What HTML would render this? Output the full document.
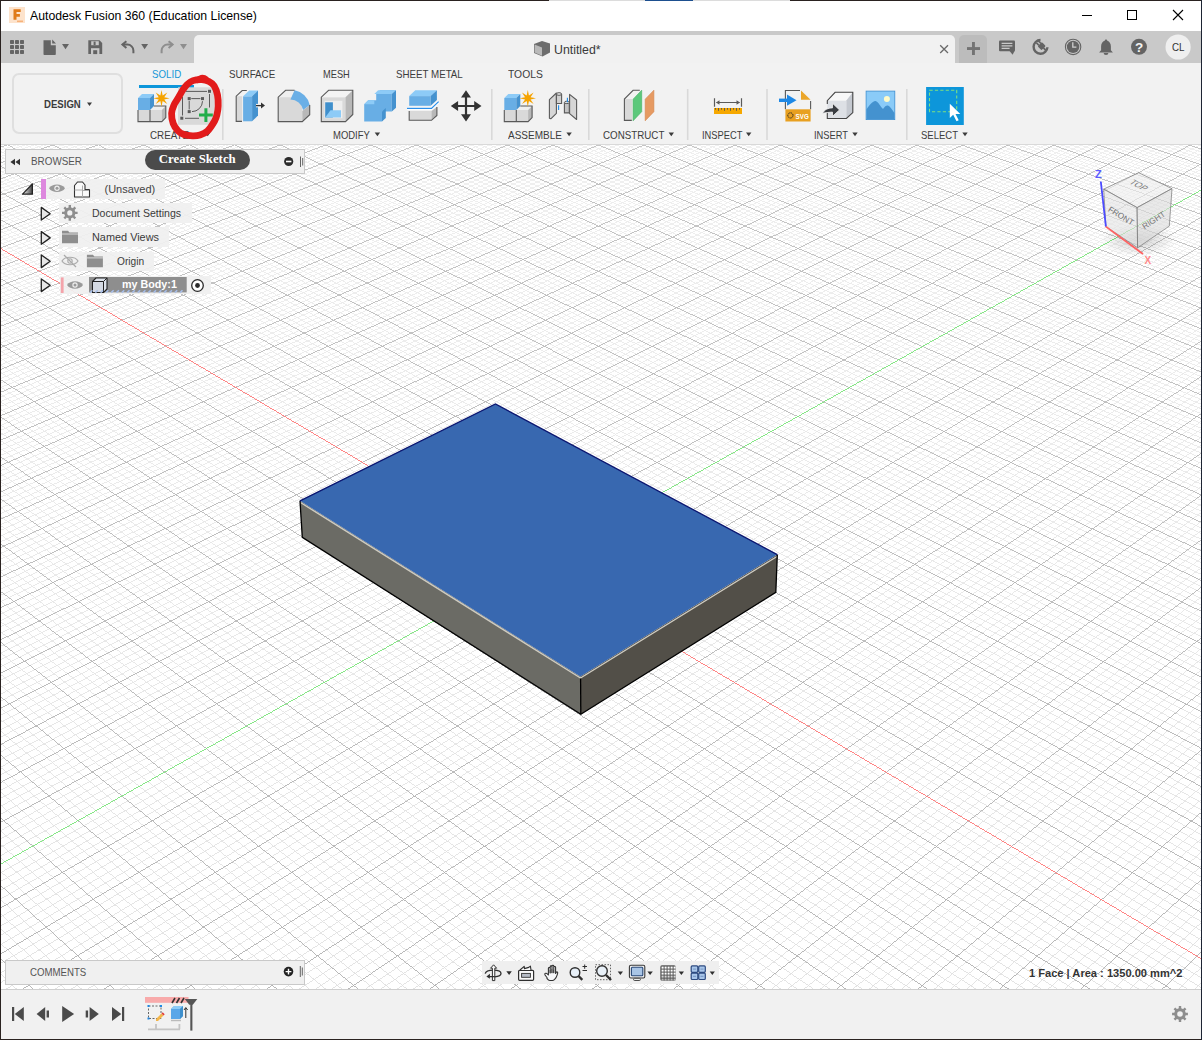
<!DOCTYPE html>
<html><head><meta charset="utf-8"><style>
html,body{margin:0;padding:0;width:1202px;height:1040px;overflow:hidden;background:#fff;font-family:"Liberation Sans",sans-serif}
.a{position:absolute}
.t{position:absolute;white-space:nowrap;line-height:1;transform-origin:0 0}
.ov{position:absolute;left:0;top:0}
.row{position:absolute;background:#f0f0f0;opacity:.93}
</style></head><body>
<div class="a" style="left:0;top:0;width:1202px;height:1040px;background:#2a2220"></div>
<div class="a" style="left:549px;top:0;width:96px;height:1px;background:#dcdcdc"></div>
<div class="a" style="left:645px;top:0;width:48px;height:1px;background:#1d4f8f"></div>
<div class="a" style="left:693px;top:0;width:97px;height:1px;background:#dcdcdc"></div>
<div class="a" style="left:1201px;top:0;width:1px;height:1040px;background:#1d2433"></div>
<div class="a" style="left:1px;top:1px;width:1200px;height:30px;background:#fff"></div>
<div class="a" style="left:1px;top:31px;width:1200px;height:32px;background:#c9c9c9"></div>
<div class="a" style="left:194px;top:35px;width:761px;height:28px;background:#f1f1f1;border-radius:5px 5px 0 0"></div>
<div class="a" style="left:959px;top:35px;width:28px;height:28px;background:#bcbcbc;border-radius:5px 5px 0 0"></div>
<div class="a" style="left:1px;top:63px;width:1200px;height:81px;background:#f2f2f2"></div>
<div class="a" style="left:1px;top:144px;width:1200px;height:1px;background:#d9d9d9"></div>
<div class="a" style="left:12px;top:73px;width:107px;height:57px;border:2px solid #dfdfdf;border-radius:7px"></div>
<div class="a" style="left:139px;top:85px;width:55px;height:2.5px;background:#0d96da"></div>
<div class="a" style="left:1px;top:145px;width:1200px;height:844px;overflow:hidden;background:#fff"><div class="a" style="left:-1px;top:-145px;width:1202px;height:1040px"><svg class="ov" width="1202" height="1040" viewBox="0 0 1202 1040" fill="none" stroke-width="0.86" shape-rendering="crispEdges"><defs><linearGradient id="gm" gradientUnits="userSpaceOnUse" x1="0" y1="145" x2="0" y2="989"><stop offset="0" stop-color="#ededed"/><stop offset="1" stop-color="#dfdfdf"/></linearGradient><linearGradient id="gM" gradientUnits="userSpaceOnUse" x1="0" y1="145" x2="0" y2="989"><stop offset="0" stop-color="#bcbcbc"/><stop offset="1" stop-color="#adadad"/></linearGradient></defs><path d="M-736.8 362L602.5 -77.2M-734.2 364.8L606.1 -76M-731.5 367.5L609.7 -74.8M-728.9 370.2L613.4 -73.6M-723.5 375.8L620.7 -71.2M-720.8 378.6L624.3 -70M-718.1 381.4L628 -68.8M-715.3 384.2L631.7 -67.6M-709.9 389.9L639.1 -65.2M-707.1 392.7L642.8 -64M-704.3 395.6L646.5 -62.7M-701.5 398.5L650.3 -61.5M-695.9 404.3L657.8 -59.1M-693.1 407.2L661.5 -57.8M-690.3 410.1L665.3 -56.6M-687.4 413L669.1 -55.3M-681.7 419L676.7 -52.8M-678.8 421.9L680.5 -51.6M-675.9 424.9L684.4 -50.3M-673 427.9L688.2 -49.1M-667.2 434L695.9 -46.5M-664.2 437L699.8 -45.3M-661.2 440.1L703.7 -44M-658.3 443.2L707.6 -42.7M-652.3 449.4L715.4 -40.1M-649.3 452.5L719.4 -38.9M-646.2 455.6L723.3 -37.6M-643.2 458.8L727.3 -36.3M-637.1 465.1L735.2 -33.7M-634 468.3L739.2 -32.4M-630.9 471.5L743.2 -31M-627.8 474.7L747.2 -29.7M-621.5 481.2L755.3 -27.1M-618.3 484.4L759.3 -25.7M-615.2 487.7L763.4 -24.4M-612 491L767.5 -23.1M-605.5 497.6L775.7 -20.4M-602.3 501L779.8 -19M-599.1 504.3L783.9 -17.7M-595.8 507.7L788 -16.3M-589.2 514.5L796.3 -13.6M-585.9 517.9L800.5 -12.2M-582.6 521.3L804.7 -10.9M-579.3 524.8L808.9 -9.5M-572.5 531.7L817.3 -6.7M-569.1 535.2L821.6 -5.3M-565.7 538.8L825.8 -3.9M-562.3 542.3L830.1 -2.5M-555.4 549.4L838.6 0.3M-551.9 553L842.9 1.7M-548.5 556.6L847.3 3.1M-544.9 560.2L851.6 4.5M-537.9 567.5L860.3 7.4M-534.3 571.2L864.7 8.8M-530.7 574.9L869 10.2M-527.2 578.6L873.4 11.7M-519.9 586.1L882.3 14.6M-516.3 589.9L886.7 16M-512.6 593.6L891.1 17.5M-508.9 597.4L895.6 18.9M-501.5 605.1L904.6 21.9M-497.8 609L909.1 23.4M-494 612.9L913.6 24.8M-490.2 616.8L918.1 26.3M-482.6 624.6L927.2 29.3M-478.8 628.6L931.8 30.8M-474.9 632.6L936.4 32.3M-471 636.6L941 33.8M-463.2 644.6L950.3 36.9M-459.3 648.7L954.9 38.4M-455.3 652.8L959.6 39.9M-451.4 656.9L964.3 41.5M-443.3 665.2L973.7 44.5M-439.3 669.4L978.4 46.1M-435.2 673.6L983.1 47.6M-431.2 677.8L987.9 49.2M-422.9 686.3L997.4 52.3M-418.8 690.6L1002.2 53.9M-414.6 694.9L1007 55.5M-410.4 699.2L1011.9 57.1M-402 707.9L1021.6 60.3M-397.7 712.3L1026.5 61.9M-393.4 716.8L1031.4 63.5M-389.1 721.2L1036.3 65.1M-380.4 730.2L1046.1 68.3M-376.1 734.7L1051.1 69.9M-371.7 739.2L1056.1 71.6M-367.2 743.8L1061.1 73.2M-358.3 753L1071.1 76.5M-353.8 757.7L1076.1 78.1M-349.3 762.4L1081.2 79.8M-344.7 767L1086.3 81.5M-335.6 776.5L1096.5 84.8M-330.9 781.3L1101.6 86.5M-326.3 786.1L1106.7 88.2M-321.6 790.9L1111.9 89.9M-312.2 800.7L1122.2 93.3M-307.4 805.6L1127.5 95M-302.6 810.6L1132.7 96.7M-297.8 815.5L1137.9 98.4M-288.1 825.6L1148.5 101.9M-283.2 830.6L1153.8 103.6M-278.3 835.7L1159.1 105.4M-273.3 840.8L1164.4 107.1M-263.3 851.1L1175.2 110.6M-258.3 856.3L1180.5 112.4M-253.2 861.6L1186 114.2M-248.1 866.9L1191.4 115.9M-237.8 877.5L1202.3 119.5M-232.6 882.9L1207.8 121.3M-227.4 888.2L1213.3 123.1M-222.1 893.7L1218.8 124.9M-211.5 904.6L1229.9 128.6M-206.2 910.2L1235.5 130.4M-200.8 915.7L1241.1 132.2M-195.4 921.3L1246.7 134.1M-184.5 932.6L1258 137.8M-179 938.3L1263.7 139.6M-173.4 944L1269.4 141.5M-167.8 949.8L1275.1 143.4M-156.6 961.4L1286.6 147.2M-150.9 967.3L1292.3 149.1M-145.1 973.2L1298.1 151M-139.4 979.2L1304 152.9M-127.8 991.2L1315.7 156.7M-121.9 997.2L1321.5 158.6M-116 1003.3L1327.4 160.6M-110 1009.5L1333.4 162.5M-98 1021.9L1345.3 166.4M-92 1028.1L1351.3 168.4M-85.9 1034.4L1357.3 170.3M-79.7 1040.8L1363.3 172.3M-67.3 1053.6L1375.4 176.3M-61.1 1060.1L1381.5 178.3M-54.8 1066.6L1387.6 180.3M-48.4 1073.1L1393.8 182.3M-35.6 1086.3L1406.1 186.4M-29.2 1093L1412.3 188.4M-22.7 1099.7L1418.6 190.4M-16.1 1106.5L1424.8 192.5M-2.9 1120.2L1437.4 196.6M3.8 1127.1L1443.7 198.7M10.6 1134.1L1450.1 200.8M17.3 1141.1L1456.4 202.9M31 1155.2L1469.2 207.1M37.9 1162.4L1475.7 209.2M44.9 1169.5L1482.1 211.3M51.9 1176.8L1488.6 213.4M66.1 1191.4L1501.7 217.7M73.3 1198.8L1508.3 219.9M80.5 1206.3L1514.8 222M87.7 1213.8L1521.5 224.2M102.4 1229L1534.8 228.6M109.8 1236.6L1541.4 230.7M117.3 1244.3L1548.2 232.9M124.8 1252.1L1554.9 235.2M140 1267.8L1568.5 239.6M147.7 1275.8L1575.3 241.8M155.5 1283.8L1582.1 244.1M163.3 1291.8L1589 246.3M179.1 1308.1L1602.8 250.9M187 1316.4L1609.8 253.1M195.1 1324.7L1616.7 255.4M203.2 1333L1623.7 257.7M219.5 1349.9L1637.8 262.4M227.8 1358.5L1644.9 264.7M236.2 1367.1L1652 267M244.6 1375.8L1659.2 269.4M261.6 1393.3L1673.5 274.1M270.1 1402.2L1680.8 276.4M278.8 1411.2L1688 278.8M287.5 1420.2L1695.3 281.2M305.2 1438.4L1710 286M314.1 1447.7L1717.3 288.4M323.1 1457L1724.7 290.9M332.2 1466.3L1732.2 293.3M350.6 1485.3L1747.1 298.2M359.9 1494.9L1754.6 300.7M369.2 1504.6L1762.2 303.1M378.7 1514.3L1769.8 305.6M397.8 1534.1L1785 310.6M407.5 1544.1L1792.7 313.1M417.2 1554.1L1800.4 315.7M427.1 1564.3L1808.2 318.2M447 1584.9L1823.7 323.3M457.1 1595.3L1831.6 325.9M467.2 1605.8L1839.4 328.5M477.5 1616.4L1847.3 331.1M498.2 1637.8L1863.2 336.3M508.7 1648.7L1871.2 338.9M519.3 1659.6L1879.2 341.5M530 1670.7L1887.3 344.2M551.7 1693L1903.5 349.5M562.6 1704.4L1911.7 352.2M573.7 1715.8L1919.9 354.9M584.9 1727.3L1928.1 357.6M-731.2 356.6L607.4 1727.3M-723 353.9L618.6 1715.8M-714.7 351.2L629.7 1704.4M-706.6 348.5L640.7 1693.1M-690.3 343.2L662.4 1670.7M-682.3 340.6L673.2 1659.7M-674.2 338L683.8 1648.8M-666.2 335.4L694.3 1637.9M-650.3 330.2L715.2 1616.5M-642.4 327.6L725.4 1605.9M-634.6 325L735.6 1595.4M-626.7 322.4L745.8 1585M-611.2 317.3L765.7 1564.5M-603.4 314.8L775.6 1554.3M-595.7 312.3L785.4 1544.3M-588 309.8L795.1 1534.3M-572.8 304.8L814.3 1514.6M-565.2 302.3L823.7 1504.8M-557.6 299.8L833.1 1495.1M-550.1 297.4L842.5 1485.6M-535.1 292.5L860.9 1466.6M-527.7 290.1L870 1457.2M-520.3 287.6L879 1447.9M-512.9 285.2L888 1438.7M-498.3 280.4L905.7 1420.5M-491 278L914.5 1411.5M-483.7 275.7L923.2 1402.5M-476.5 273.3L931.8 1393.7M-462.1 268.6L948.8 1376.1M-455 266.3L957.3 1367.5M-447.9 263.9L965.6 1358.8M-440.8 261.6L973.9 1350.3M-426.7 257L990.4 1333.4M-419.7 254.7L998.5 1325.1M-412.7 252.4L1006.6 1316.8M-405.7 250.2L1014.6 1308.5M-391.9 245.6L1030.4 1292.2M-385 243.4L1038.2 1284.2M-378.2 241.2L1046 1276.2M-371.4 238.9L1053.7 1268.3M-357.8 234.5L1069 1252.6M-351 232.3L1076.5 1244.8M-344.3 230.1L1084 1237.1M-337.6 227.9L1091.5 1229.4M-324.3 223.5L1106.2 1214.3M-317.7 221.4L1113.5 1206.8M-311.1 219.2L1120.7 1199.3M-304.6 217.1L1127.9 1191.9M-291.5 212.8L1142.1 1177.3M-285 210.7L1149.2 1170.1M-278.5 208.6L1156.2 1162.9M-272.1 206.5L1163.1 1155.7M-259.3 202.3L1176.8 1141.6M-252.9 200.2L1183.6 1134.6M-246.5 198.1L1190.4 1127.7M-240.2 196L1197.1 1120.7M-227.6 191.9L1210.4 1107.1M-221.4 189.9L1217 1100.3M-215.1 187.8L1223.5 1093.6M-208.9 185.8L1230 1086.9M-196.6 181.8L1242.8 1073.7M-190.4 179.8L1249.2 1067.2M-184.3 177.8L1255.5 1060.7M-178.2 175.8L1261.8 1054.2M-166.1 171.8L1274.2 1041.4M-160 169.8L1280.4 1035.1M-154 167.9L1286.5 1028.8M-148 165.9L1292.6 1022.5M-136.1 162L1304.7 1010.1M-130.2 160.1L1310.6 1004M-124.3 158.1L1316.5 997.9M-118.4 156.2L1322.4 991.8M-106.7 152.4L1334.1 979.8M-100.9 150.5L1339.9 973.9M-95.1 148.6L1345.6 968M-89.3 146.7L1351.3 962.1M-77.8 142.9L1362.6 950.5M-72.1 141.1L1368.2 944.7M-66.4 139.2L1373.8 939M-60.7 137.3L1379.4 933.3M-49.4 133.6L1390.3 922M-43.8 131.8L1395.8 916.4M-38.2 130L1401.2 910.9M-32.6 128.1L1406.5 905.3M-21.5 124.5L1417.2 894.4M-16 122.7L1422.4 889M-10.5 120.9L1427.7 883.6M-5 119.1L1432.9 878.2M5.9 115.5L1443.2 867.6M11.4 113.8L1448.3 862.3M16.8 112L1453.4 857.1M22.2 110.2L1458.5 851.9M32.9 106.7L1468.5 841.6M38.2 105L1473.5 836.4M43.6 103.2L1478.4 831.4M48.9 101.5L1483.4 826.3M59.4 98.1L1493.1 816.3M64.7 96.3L1497.9 811.3M69.9 94.6L1502.7 806.4M75.1 92.9L1507.5 801.5M85.5 89.5L1517 791.7M90.7 87.8L1521.7 786.9M95.8 86.2L1526.3 782.1M100.9 84.5L1531 777.3M111.1 81.1L1540.2 767.8M116.2 79.5L1544.8 763.1M121.3 77.8L1549.3 758.5M126.3 76.2L1553.8 753.8M136.4 72.9L1562.8 744.6M141.4 71.3L1567.2 740M146.3 69.6L1571.6 735.5M151.3 68L1576 731M161.2 64.8L1584.7 722M166.1 63.2L1589.1 717.6M171 61.6L1593.4 713.1M175.9 60L1597.6 708.8M185.6 56.8L1606.1 700M190.4 55.2L1610.3 695.7M195.2 53.6L1614.5 691.4M200 52.1L1618.7 687.1M209.6 48.9L1626.9 678.6M214.4 47.4L1631 674.4M219.1 45.8L1635.1 670.2M223.8 44.3L1639.2 666M233.2 41.2L1647.2 657.8M237.9 39.7L1651.2 653.7M242.6 38.2L1655.2 649.6M247.2 36.6L1659.1 645.5M256.5 33.6L1667 637.4M261.1 32.1L1670.9 633.4M265.7 30.6L1674.7 629.5M270.3 29.1L1678.6 625.5M279.4 26.1L1686.2 617.6M283.9 24.6L1690 613.7M288.5 23.2L1693.8 609.9M293 21.7L1697.5 606M301.9 18.8L1705 598.3M306.4 17.3L1708.7 594.5M310.9 15.8L1712.4 590.7M315.3 14.4L1716 587M324.1 11.5L1723.3 579.5M328.5 10.1L1726.9 575.8M332.9 8.6L1730.5 572.1M337.3 7.2L1734.1 568.4M346 4.3L1741.1 561.1M350.3 2.9L1744.7 557.5M354.6 1.5L1748.2 553.9M359 0.1L1751.7 550.3M367.5 -2.7L1758.6 543.2M371.8 -4.1L1762 539.7M376 -5.5L1765.4 536.2M380.3 -6.9L1768.8 532.7M388.7 -9.6L1775.6 525.7M392.9 -11L1778.9 522.3M397.1 -12.4L1782.3 518.8M401.3 -13.7L1785.6 515.4M409.6 -16.5L1792.2 508.6M413.8 -17.8L1795.5 505.2M417.9 -19.2L1798.7 501.9M422 -20.5L1802 498.6M430.2 -23.2L1808.4 491.9M434.3 -24.5L1811.6 488.6M438.3 -25.8L1814.8 485.4M442.4 -27.2L1818 482.1M450.5 -29.8L1824.3 475.6M454.5 -31.1L1827.4 472.4M458.5 -32.4L1830.5 469.2M462.5 -33.7L1833.6 466M470.4 -36.3L1839.8 459.7M474.4 -37.6L1842.8 456.5M478.4 -38.9L1845.9 453.4M482.3 -40.2L1848.9 450.3M490.1 -42.8L1854.9 444.1M494 -44.1L1857.9 441M497.9 -45.3L1860.9 438M501.8 -46.6L1863.8 434.9M509.5 -49.1L1869.7 428.9M513.4 -50.4L1872.6 425.9M517.2 -51.6L1875.5 422.9M521 -52.9L1878.4 419.9M528.7 -55.4L1884.2 414M532.5 -56.6L1887 411.1M536.2 -57.9L1889.9 408.1M540 -59.1L1892.7 405.2M547.5 -61.6L1898.3 399.4M551.3 -62.8L1901.1 396.6M555 -64L1903.9 393.7M558.7 -65.2L1906.7 390.8M566.1 -67.6L1912.2 385.2M569.8 -68.8L1914.9 382.4M573.5 -70L1917.7 379.6M577.1 -71.2L1920.4 376.8M584.4 -73.6L1925.8 371.2M588.1 -74.8L1928.4 368.5M591.7 -76L1931.1 365.7M595.3 -77.2L1933.8 363" stroke="url(#gm)"/><path d="M-739.5 359.3L598.9 -78.4M-726.2 373L617 -72.4M-712.6 387L635.4 -66.4M-698.7 401.4L654 -60.3M-684.6 416L672.9 -54.1M-670.1 431L692.1 -47.8M-655.3 446.3L711.5 -41.4M-640.1 461.9L731.2 -35M-624.6 477.9L751.2 -28.4M-608.8 494.3L771.6 -21.7M-592.5 511.1L792.2 -15M-575.9 528.3L813.1 -8.1M-558.9 545.8L834.4 -1.1M-541.4 563.9L855.9 5.9M-523.5 582.3L877.8 13.1M-505.2 601.3L900.1 20.4M-486.4 620.7L922.7 27.8M-467.1 640.6L945.6 35.3M-447.4 661L969 43M-427 682L992.6 50.8M-406.2 703.6L1016.7 58.7M-384.8 725.7L1041.2 66.7M-362.8 748.4L1066.1 74.8M-340.2 771.8L1091.3 83.1M-316.9 795.8L1117.1 91.6M-293 820.5L1143.2 100.1M-268.3 846L1169.8 108.9M-243 872.2L1196.8 117.7M-216.9 899.1L1224.3 126.7M-189.9 926.9L1252.3 135.9M-133.6 985.2L1309.8 154.8M-104.1 1015.7L1339.3 164.5M-73.6 1047.2L1369.3 174.3M-42.1 1079.7L1399.9 184.3M-9.5 1113.3L1431.1 194.6M24.2 1148.1L1462.8 205M59 1184.1L1495.1 215.6M95.1 1221.3L1528.1 226.4M132.4 1259.9L1561.7 237.4M171.1 1299.9L1595.9 248.6M211.3 1341.4L1630.8 260M253 1384.5L1666.3 271.7M296.3 1429.3L1702.6 283.6M341.4 1475.8L1739.6 295.7M388.2 1524.2L1777.4 308.1M437 1574.5L1815.9 320.8M487.8 1627L1855.3 333.7M540.8 1681.8L1895.4 346.8M596.1 1738.9L1936.4 360.3M-739.5 359.3L596.1 1738.9M-698.4 345.9L651.6 1681.9M-658.3 332.7L704.8 1627.2M-618.9 319.9L755.8 1574.7M-580.4 307.3L804.7 1524.4M-542.6 294.9L851.7 1476M-505.6 282.8L896.9 1429.6M-469.3 270.9L940.3 1384.9M-433.7 259.3L982.2 1341.8M-398.8 247.9L1022.5 1300.4M-364.6 236.7L1061.4 1260.4M-331 225.7L1098.8 1221.8M-298 214.9L1135 1184.6M-265.7 204.4L1170 1148.6M-233.9 194L1203.8 1113.9M-202.7 183.8L1236.4 1080.3M-172.1 173.8L1268 1047.8M-112.6 154.3L1328.3 985.8M-83.5 144.8L1357 956.3M-55 135.5L1384.9 927.6M-27 126.3L1411.9 899.8M0.5 117.3L1438.1 872.9M27.6 108.5L1463.5 846.7M54.2 99.8L1488.2 821.3M80.3 91.2L1512.3 796.6M106 82.8L1535.6 772.6M131.3 74.5L1558.3 749.2M156.2 66.4L1580.4 726.5M180.7 58.4L1601.9 704.4M204.8 50.5L1622.8 682.9M228.5 42.8L1643.2 661.9M251.9 35.1L1663.1 641.5M274.8 27.6L1682.4 621.6M297.5 20.2L1701.3 602.1M319.7 12.9L1719.7 583.2M341.7 5.8L1737.6 564.8M363.2 -1.3L1755.1 546.8M384.5 -8.2L1772.2 529.2M405.5 -15.1L1788.9 512M426.1 -21.8L1805.2 495.2M446.4 -28.5L1821.1 478.9M466.5 -35L1836.7 462.8M486.2 -41.5L1851.9 447.2M505.7 -47.9L1866.8 431.9M524.9 -54.1L1881.3 416.9M543.8 -60.3L1895.5 402.3M562.4 -66.4L1909.5 388M580.8 -72.4L1923.1 374M598.9 -78.4L1936.4 360.3" stroke="url(#gM)"/><path d="M-142.1 163.9L1298.6 1016.3" stroke="#ff7878" stroke-width="0.9" shape-rendering="crispEdges"/><path d="M-162.2 955.6L1280.8 145.3" stroke="#7ae47a" stroke-width="0.9" shape-rendering="crispEdges"/></svg><svg class="ov" width="1202" height="1040" viewBox="0 0 1202 1040"><polygon points="300,500.8 580.4,676.5 580.8,714.2 302.3,537.3" fill="#6b6b65"/><polygon points="580.4,676.5 777.3,554.6 775.8,592.3 580.8,714.2" fill="#524f48"/><polygon points="300,500.8 495.5,404 777.3,554.6 580.4,676.5" fill="#3868b0"/><polyline points="300.5,502.5 580.5,678 777,556.5" fill="none" stroke="#cfccc2" stroke-width="1.4"/><polyline points="777.3,554.6 775.8,592.3 580.8,714.2 302.3,537.3 300,500.8" fill="none" stroke="#000" stroke-width="1.3"/><polyline points="300,500.8 495.5,404 777.3,554.6" fill="none" stroke="#0a1570" stroke-width="1.3"/><line x1="580.6" y1="678.5" x2="580.8" y2="714.2" stroke="#000" stroke-width="1.3"/></svg></div></div>
<div class="a" style="left:5px;top:149px;width:298px;height:23px;background:#f0f0f0;border:1px solid #c9c9c9"></div>
<div class="a" style="left:145px;top:150px;width:105px;height:20px;background:#4b4b4b;border-radius:10px"></div>
<div class="row" style="left:41.0px;top:178.7px;width:123.8px;height:20.1px"></div>
<div class="row" style="left:59.0px;top:203.0px;width:133.2px;height:20.3px"></div>
<div class="row" style="left:59.0px;top:226.9px;width:109.9px;height:20.5px"></div>
<div class="row" style="left:59.0px;top:251.7px;width:95.0px;height:19.1px"></div>
<div class="row" style="left:60.0px;top:275.8px;width:151.3px;height:18.2px"></div>
<div class="a" style="left:5px;top:960px;width:298px;height:23px;background:#f0f0f0;border:1px solid #c9c9c9"></div>
<div class="a" style="left:482px;top:961px;width:237px;height:23px;background:#efefef"></div>
<div class="a" style="left:1px;top:989px;width:1200px;height:1px;background:#cfcfcf"></div>
<div class="a" style="left:1px;top:990px;width:1200px;height:49px;background:#f1f1f1"></div>
<svg class="ov" width="1202" height="1040" viewBox="0 0 1202 1040"><rect x="9" y="7" width="16" height="16" fill="#fde3cc"/><path d="M13.5 9.2h7.2v2.8h-4.2v2.1h3.4v2.7h-3.4v3h-3z" fill="#e07a18"/><path d="M17 20.5h6v1.6h-6z" fill="#f7b27a"/><path d="M1082 15.5H1092" stroke="#000" stroke-width="1"/><rect x="1127.5" y="10.5" width="9" height="9" fill="none" stroke="#000" stroke-width="1"/><path d="M1173 10L1183 20M1183 10L1173 20" stroke="#000" stroke-width="1.1"/><rect x="10.0" y="40.0" width="4" height="4" rx="0.7" fill="#646464"/><rect x="10.0" y="45.0" width="4" height="4" rx="0.7" fill="#646464"/><rect x="10.0" y="50.0" width="4" height="4" rx="0.7" fill="#646464"/><rect x="15.0" y="40.0" width="4" height="4" rx="0.7" fill="#646464"/><rect x="15.0" y="45.0" width="4" height="4" rx="0.7" fill="#646464"/><rect x="15.0" y="50.0" width="4" height="4" rx="0.7" fill="#646464"/><rect x="20.0" y="40.0" width="4" height="4" rx="0.7" fill="#646464"/><rect x="20.0" y="45.0" width="4" height="4" rx="0.7" fill="#646464"/><rect x="20.0" y="50.0" width="4" height="4" rx="0.7" fill="#646464"/><path d="M43.5 40.2h7.3v5h5v9a.8.8 0 0 1-.8.8h-10.7a.8.8 0 0 1-.8-.8z" fill="#646464"/><path d="M52.2 39.6l3.8 3.8h-3.8z" fill="#646464"/><path d="M62.0 44.0H69.0L65.5 49.2Z" fill="#646464"/><path d="M88.3 40.2h11.2l2.7 2.7v11.2h-13.9z" fill="#646464"/><rect x="91.2" y="41.2" width="7.6" height="4" fill="#c9c9c9"/><rect x="93.6" y="41.6" width="2" height="3.4" fill="#646464"/><rect x="91" y="48.2" width="8.4" height="5.9" fill="#c9c9c9"/><rect x="93.2" y="50.2" width="4" height="3.9" fill="#646464"/><path d="M133.4 53.2v-2.6a6 6 0 0 0-6-6h-4.8" fill="none" stroke="#646464" stroke-width="2"/><path d="M126.4 41.2l-4 3.4l4 3.4" fill="none" stroke="#646464" stroke-width="2"/><path d="M141.2 44.0H148.1L144.6 49.2Z" fill="#646464"/><path d="M161.6 53.2v-2.6a6 6 0 0 1 6-6h4.8" fill="none" stroke="#8e8e8e" stroke-width="2"/><path d="M168.6 41.2l4 3.4l-4 3.4" fill="none" stroke="#8e8e8e" stroke-width="2"/><path d="M180.0 44.0H187.0L183.5 49.2Z" fill="#8e8e8e"/><path d="M534 44l8-3l8 2.5v9l-7.5 4l-8.5-3.5z" fill="#6d6d6d"/><path d="M534.6 44.6l7.4 2.9v8.3l-7.4-3.2z" fill="#b9b9b9"/><path d="M940.2 45.2L948 53M948 45.2L940.2 53" stroke="#6a6a6a" stroke-width="1.3"/><rect x="967" y="47.1" width="13" height="2.9" fill="#737373"/><rect x="972" y="42" width="2.9" height="13" fill="#737373"/><rect x="999" y="40.5" width="16" height="10.8" rx="1" fill="#646464"/><path d="M1009.6 51h5l-2 3.8z" fill="#646464"/><path d="M1001.6 43.4h10.8M1001.6 45.9h10.8M1001.6 48.4h8" stroke="#c9c9c9" stroke-width="1.1"/><path d="M1040.5 40a6.9 6.9 0 1 0 6.9 7.2" fill="none" stroke="#646464" stroke-width="2.4"/><g transform="rotate(-45 1041.5 46)"><rect x="1038.5" y="43.5" width="6" height="5.5" rx="1" fill="#646464"/><rect x="1039.3" y="40.2" width="1.6" height="3.6" fill="#646464"/><rect x="1042.1" y="40.2" width="1.6" height="3.6" fill="#646464"/><rect x="1040.6" y="48.8" width="1.8" height="3" fill="#646464"/></g><circle cx="1073.1" cy="46.9" r="7.7" fill="none" stroke="#646464" stroke-width="1.1"/><circle cx="1073.1" cy="46.9" r="6.2" fill="#646464"/><path d="M1072.8 42.3v4.9h3.6" fill="none" stroke="#cfcfcf" stroke-width="1.3"/><path d="M1106 39.5c-.9 0-1.3.7-1.3 1.3c-2.4.8-3.6 3-3.6 5.6v3.8l-2 2.4h13.8l-2-2.4v-3.8c0-2.6-1.2-4.8-3.6-5.6c0-.6-.4-1.3-1.3-1.3z" fill="#646464"/><path d="M1103.6 53h4.8a2.4 2 0 0 1-4.8 0z" fill="#646464"/><circle cx="1139" cy="46.8" r="8" fill="#646464"/><text x="1139" y="51.6" font-family="Liberation Sans" font-weight="bold" font-size="13.5" fill="#f4f4f4" text-anchor="middle">?</text><circle cx="1178.1" cy="47" r="12.6" fill="#efefef"/><rect x="222.0" y="89" width="1.6" height="51" fill="#d9d9d9"/><rect x="491.0" y="89" width="1.6" height="51" fill="#d9d9d9"/><rect x="588.0" y="89" width="1.6" height="51" fill="#d9d9d9"/><rect x="686.9" y="89" width="1.6" height="51" fill="#d9d9d9"/><rect x="766.2" y="89" width="1.6" height="51" fill="#d9d9d9"/><rect x="906.0" y="89" width="1.6" height="51" fill="#d9d9d9"/><path d="M138.0 110.0h12v11.6h-12z" fill="#d9d9d9"/><path d="M150.0 110.0h11.8v11.6h-11.8z" fill="#d9d9d9"/><path d="M150.0 110.0l4-4h11.8l-4 4z" fill="#efefef"/><path d="M161.8 110.0l4-4v11.6l-4 4z" fill="#b8b8b8"/><path d="M138.0 110.0v11.6h23.8l4-4v-11.6h-11.8" fill="none" stroke="#595959" stroke-width="1.1"/><path d="M150.0 110.0v11.6" stroke="#595959" stroke-width="1.1"/><path d="M138.0 98.0h12v12h-12z" fill="#68aee5"/><path d="M138.0 98.0l4-4h12l-4 4z" fill="#8dcbf7"/><path d="M150.0 98.0l4-4v12l-4 4z" fill="#4592cf"/><path d="M161.50 90.10 L162.65 95.53 L167.30 92.50 L164.27 97.15 L169.70 98.30 L164.27 99.45 L167.30 104.10 L162.65 101.07 L161.50 106.50 L160.35 101.07 L155.70 104.10 L158.73 99.45 L153.30 98.30 L158.73 97.15 L155.70 92.50 L160.35 95.53Z" fill="#f5a300"/><rect x="178" y="87.3" width="36.8" height="37.5" fill="#d9d9d9"/><g fill="#5a5a5a"><rect x="208.0" y="89.8" width="3" height="3"/><rect x="180.3" y="116.7" width="3" height="3"/><rect x="187.7" y="97.1" width="3" height="3"/><rect x="201.0" y="97.1" width="3" height="3"/><rect x="187.7" y="110.1" width="3" height="3"/></g><path d="M186 91.4H207M209.5 94V107.5M182.5 97V115.5M185 118.3H199M191.3 98.6H200.4M189.2 100.8V109.4M202.5 101.2A10.5 10.5 0 0 1 192 111.6" fill="none" stroke="#5a5a5a" stroke-width="1"/><path d="M204.4 108.2h3v5.4h5.4v3h-5.4v5.4h-3v-5.4h-5.4v-3h5.4z" fill="#22ad4b"/><path d="M236.2 96.2h6v25.2h-6z" fill="#d9d9d9"/><path d="M242 121.4h-5.8V96.2l6-5.7h4.6" fill="none" stroke="#595959" stroke-width="1.1"/><path d="M243.1 96.3h9v25h-9z" fill="#68aee5"/><path d="M243.1 96.3l6.1-5.8h8.8l-5.9 5.8z" fill="#8dcbf7"/><path d="M252.1 96.3l5.9-5.8v25l-5.9 5.8z" fill="#4592cf"/><path d="M256 105.6h5.5" stroke="#fff" stroke-width="3.4"/><path d="M256 105.6h6" stroke="#333" stroke-width="1.4"/><path d="M261 102.6l4 3l-4 3z" fill="#333"/><path d="M278.2 97.2l7.4-6.9h9v8.5a12 12 0 0 1 15.1 6.1v9.8l-7.4 6.9h-24.1z" fill="#efefef"/><path d="M278.2 97.2h12a12 12 0 0 1 12 12v12.4h-24z" fill="#d9d9d9"/><path d="M302.3 111l7.4-6.1v9.8l-7.4 6.9z" fill="#b8b8b8"/><path d="M294.6 90.3a19 19 0 0 1 15.1 14.6l-6.6 5.1a13 13 0 0 0-12.7-10.6z" fill="#6aafe6"/><path d="M294.6 90.3h-9l-7.4 6.9v24.4h24.1l7.4-6.9v-9.8" fill="none" stroke="#595959" stroke-width="1.1"/><path d="M321.3 97.2h24.2v24.4h-24.2z" fill="#d9d9d9"/><path d="M321.3 97.2l7.3-6.9h24.2l-7.3 6.9z" fill="#f4f4f4"/><path d="M345.5 97.2l7.3-6.9v24.2l-7.3 7.1z" fill="#b8b8b8"/><rect x="324.5" y="100.8" width="17.9" height="17.4" fill="#eeeeee"/><path d="M325.2 102.3h7.7v15.2h-7.7z" fill="#3f8fcc"/><path d="M325.2 117.5l5.3-7.2h10.5v7.2z" fill="#8dcbf7"/><path d="M321.3 97.2v24.4h24.2l7.3-7.1v-24.2h-24.2z" fill="none" stroke="#595959" stroke-width="1.1"/><path d="M364.2 104.3l4-4h8v-6.2l3.8-3.8h16l-4.2 3.8v17.5h-9.8v10h-17.8z" fill="#68aee5"/><path d="M364.2 104.3l4-4h6.1v4z" fill="#8dcbf7"/><path d="M374.3 94.1l3.8-3.8h17.9l-4.2 3.8z" fill="#8dcbf7"/><path d="M391.8 94.1l4.2-3.8v17.4l-4.2 3.9z" fill="#4592cf"/><path d="M382 111.6l3.8-3.6v10l-3.8 3.6z" fill="#4592cf"/><path d="M409.2 111h22.3v9.3h-22.3z" fill="#d9d9d9"/><path d="M431.5 111l5.4-4v8.5l-5.4 4.8z" fill="#b8b8b8"/><path d="M409.2 111v9.3h22.3l5.4-4.8v-8.5" fill="none" stroke="#595959" stroke-width="1.1"/><path d="M409.2 96.1h21.4v9.7h-21.4z" fill="#68aee5"/><path d="M409.2 96.1l6.1-5.8h21.6l-6.3 5.8z" fill="#8dcbf7"/><path d="M430.6 96.1l6.3-5.8v9.8l-6.3 5.7z" fill="#4592cf"/><path d="M407 108.4h24.5l7.1-6.8" fill="none" stroke="#fff" stroke-width="3"/><path d="M407 108.4h24.5l7.1-6.8" fill="none" stroke="#2b8ee8" stroke-width="1.3"/><path d="M466 93v26M453.5 106h25" stroke="#333" stroke-width="2.2"/><path d="M466 90.3l5 7.3h-10zM466 121.6l5-7.3h-10zM450.8 106l7.3-5v10zM481.5 106l-7.3-5v10z" fill="#333"/><path d="M504.3 110.0h12v11.6h-12z" fill="#d9d9d9"/><path d="M516.3 110.0h11.8v11.6h-11.8z" fill="#d9d9d9"/><path d="M516.3 110.0l4-4h11.8l-4 4z" fill="#efefef"/><path d="M528.1 110.0l4-4v11.6l-4 4z" fill="#b8b8b8"/><path d="M504.3 110.0v11.6h23.8l4-4v-11.6h-11.8" fill="none" stroke="#595959" stroke-width="1.1"/><path d="M516.3 110.0v11.6" stroke="#595959" stroke-width="1.1"/><path d="M504.3 98.0h12v12h-12z" fill="#68aee5"/><path d="M504.3 98.0l4-4h12l-4 4z" fill="#8dcbf7"/><path d="M516.3 98.0l4-4v12l-4 4z" fill="#4592cf"/><path d="M527.80 90.10 L528.95 95.53 L533.60 92.50 L530.57 97.15 L536.00 98.30 L530.57 99.45 L533.60 104.10 L528.95 101.07 L527.80 106.50 L526.65 101.07 L522.00 104.10 L525.03 99.45 L519.60 98.30 L525.03 97.15 L522.00 92.50 L526.65 95.53Z" fill="#f5a300"/><path d="M549.4 99.6L556.4 93V113.3L550.8 118.8L549.4 118.2Z" fill="#d6d6d6" stroke="#5a5a5a" stroke-width="1.1" stroke-linejoin="round"/><path d="M556.4 94v9.5h5.2V94" fill="#d0d0d0" stroke="#5a5a5a" stroke-width="1.1"/><ellipse cx="559" cy="94" rx="2.6" ry="1.3" fill="#eee" stroke="#5a5a5a" stroke-width="1"/><path d="M569.6 94.4L576.6 100V119.5L569.6 113.6Z" fill="#d6d6d6" stroke="#5a5a5a" stroke-width="1.1" stroke-linejoin="round"/><path d="M564.4 102.4v10.5h4.9V102.4" fill="#c4c4c4" stroke="#5a5a5a" stroke-width="1.1"/><ellipse cx="566.85" cy="102.4" rx="2.45" ry="1.2" fill="#e6e6e6" stroke="#5a5a5a" stroke-width="1"/><path d="M558.6 105.2v4.8M567.4 97.8v4.4" stroke="#1f8ae6" stroke-width="1.1"/><path d="M624.4 99h7.7v21.4h-7.7z" fill="#d9d9d9"/><path d="M631.8 120.4h-7.4V99l8.7-8.7h6.7" fill="none" stroke="#595959" stroke-width="1.1"/><path d="M633.1 99.2l8.6-9v21.5l-8.6 9.1z" fill="#5cc87b" stroke="#43b062" stroke-width=".6"/><path d="M645.2 99.2l8.7-9v21.5l-8.7 9.1z" fill="#e69a62" stroke="#d4854c" stroke-width=".6"/><path d="M714.5 98.2v8.6M741.5 98.2v8.6M716.5 102.5h23" stroke="#5a5a5a" stroke-width="1.2"/><path d="M716 102.5l3.5-2.3v4.6zM740 102.5l-3.5-2.3v4.6z" fill="#5a5a5a"/><rect x="714" y="108" width="28" height="6" fill="#f6a800"/><path d="M715.5 108v1.7M718.5 108v2.8M721.5 108v1.7M724.5 108v2.8M727.5 108v1.7M730.5 108v2.8M733.5 108v1.7M736.5 108v2.8M739.5 108v1.7" stroke="#555" stroke-width=".9"/><path d="M785.4 109.3V90.5h14.6M810.6 101v8.3" fill="none" stroke="#595959" stroke-width="1.1"/><rect x="786" y="91" width="24" height="18.3" fill="#f4f4f4" opacity="0"/><path d="M801 90.5l9.6 9.3h-9.6z" fill="#eba62a"/><rect x="785.4" y="109.3" width="25.2" height="12.2" fill="#e8a020"/><text x="795.6" y="119.3" font-family="Liberation Sans" font-weight="bold" font-size="8" fill="#fff" transform="translate(795.6,0) scale(.78,1) translate(-795.6,0)">SVG</text><circle cx="790.4" cy="115.4" r="2.6" fill="none" stroke="#222" stroke-width="1" stroke-dasharray="1.2 .6"/><path d="M779 98.6h8.5v3.4h-8.5z" fill="#1e88e5"/><path d="M787 94.5l9.5 5.7l-9.5 5.6z" fill="#1e88e5"/><path d="M827.3 100.6h19.1v17.9h-19.1z" fill="#dde0e5"/><path d="M827.3 100.6l7.8-8.3h17.7l-6.4 8.3z" fill="#f8f8f8"/><path d="M846.4 100.6l6.4-8.3v20.3l-6.4 5.9z" fill="#c5c9d0"/><path d="M827.3 110v8.5h19.1l6.4-5.9v-20.3h-17.7l-7.8 8.3v3.5" fill="none" stroke="#444" stroke-width="1.1"/><path d="M822.5 113.5c2-4 5.5-5.5 10-5.6v-4.6l7 6.6l-7 6.4v-4.2c-4 .2-7.2 .6-10 1.4z" fill="#3a3d42" stroke="#f4f4f4" stroke-width=".8"/><rect x="866.1" y="91.1" width="28.7" height="28.5" fill="#8acbf8" stroke="#3d8ed0" stroke-width=".8"/><circle cx="886.9" cy="98.9" r="3" fill="#fffbc8"/><path d="M866.5 109.5c3-5 7-9 9-8.5c3 .8 5 6 7.5 8c2-3 3.5-4 5-3.5c2 .8 4.5 4.5 6.4 7.5v6.2h-27.9z" fill="#4492cf"/><rect x="926.1" y="87" width="37.7" height="38" fill="#0d96da"/><rect x="929.5" y="90.2" width="27.2" height="21.5" fill="none" stroke="#7fe07f" stroke-width="1.1" stroke-dasharray="3.2 2.2"/><path d="M949.8 103.8v14.2l3.4-3.2l3.3 6.5l2.2-1.1l-3.2-6.3h4.8z" fill="#fff"/><path d="M205.0 132.4H210.4L207.7 136.2Z" fill="#3c3c3c"/><path d="M374.7 132.4H380.1L377.4 136.2Z" fill="#3c3c3c"/><path d="M566.4 132.4H571.8L569.1 136.2Z" fill="#3c3c3c"/><path d="M668.6 132.4H674.0L671.3 136.2Z" fill="#3c3c3c"/><path d="M746.0 132.4H751.4L748.7 136.2Z" fill="#3c3c3c"/><path d="M852.3 132.4H857.7L855.0 136.2Z" fill="#3c3c3c"/><path d="M962.3 132.4H967.7L965.0 136.2Z" fill="#3c3c3c"/><path d="M87.0 102.5H92.0L89.5 106.0Z" fill="#3c3c3c"/><path d="M10.4 162l4.6-3.2v6.4zM15.4 162l4.6-3.2v6.4z" fill="#333"/><circle cx="288.7" cy="161.5" r="4.6" fill="#2b2b2b"/><path d="M286 161.5h5.4" stroke="#fff" stroke-width="1.6"/><path d="M300.5 156.5v10.5M302.7 158v7.5" stroke="#555" stroke-width=".9"/><defs><linearGradient id="tg" x1="0" y1="0" x2="1" y2="0"><stop offset="0" stop-color="#fafafa"/><stop offset="1" stop-color="#444"/></linearGradient></defs><path d="M22.5 194.2L32.4 184v10.2z" fill="url(#tg)" stroke="#222" stroke-width="1.2" stroke-linejoin="round"/><rect x="41" y="179" width="5" height="20" fill="#dd88de"/><path d="M49.0 188.3c3-5 13-5 16 0c-3 5-13 5-16 0z" fill="#9a9a9a"/><circle cx="57.0" cy="188.3" r="2.7" fill="#eee"/><circle cx="57.0" cy="188.3" r="1.5" fill="#9a9a9a"/><path d="M74.5 185.5l3-3.5h5l2.5 3v4.5h4l.5 .5v7h-15z" fill="#fafafa" stroke="#333" stroke-width="1.1" stroke-linejoin="round"/><path d="M74.5 190h8M82.5 185.5v11.5M82.5 190.5h6.5" stroke="#aaa" stroke-width="1"/><path d="M41.3 207.4L50.2 213.7L41.3 220.0z" fill="#e8e8e8" stroke="#222" stroke-width="1.3" stroke-linejoin="round"/><path d="M41.3 231.6L50.2 237.9L41.3 244.2z" fill="#e8e8e8" stroke="#222" stroke-width="1.3" stroke-linejoin="round"/><path d="M41.3 255.0L50.2 261.3L41.3 267.6z" fill="#e8e8e8" stroke="#222" stroke-width="1.3" stroke-linejoin="round"/><path d="M41.3 279.0L50.2 285.3L41.3 291.6z" fill="#e8e8e8" stroke="#222" stroke-width="1.3" stroke-linejoin="round"/><path d="M75.27 211.70 L77.61 211.71 L77.61 214.09 L75.27 214.10 L74.97 215.04 L74.52 215.92 L76.16 217.58 L74.48 219.26 L72.82 217.62 L71.94 218.07 L71.00 218.37 L70.99 220.71 L68.61 220.71 L68.60 218.37 L67.66 218.07 L66.78 217.62 L65.12 219.26 L63.44 217.58 L65.08 215.92 L64.63 215.04 L64.33 214.10 L61.99 214.09 L61.99 211.71 L64.33 211.70 L64.63 210.76 L65.08 209.88 L63.44 208.22 L65.12 206.54 L66.78 208.18 L67.66 207.73 L68.60 207.43 L68.61 205.09 L70.99 205.09 L71.00 207.43 L71.94 207.73 L72.82 208.18 L74.48 206.54 L76.16 208.22 L74.52 209.88 L74.97 210.76Z" fill="#8e8e8e"/><circle cx="69.80" cy="212.90" r="2.60" fill="#f0f0f0"/><path d="M62.0 230.8h6l1.5 1.8h8.5v10.7h-16z" fill="#8e8e8e"/><path d="M62.0 234.0h16" stroke="#f0f0f0" stroke-width=".8"/><path d="M62 261c3-5 13-5 16 0c-3 5-13 5-16 0z" fill="none" stroke="#aaa" stroke-width="1.2"/><circle cx="70" cy="261" r="2.2" fill="none" stroke="#aaa" stroke-width="1.1"/><path d="M64 255l12 12" stroke="#aaa" stroke-width="1.2"/><path d="M86.9 254.7h6l1.5 1.8h8.5v10.7h-16z" fill="#8e8e8e"/><path d="M86.9 257.9h16" stroke="#f0f0f0" stroke-width=".8"/><rect x="60.8" y="277.4" width="2.8" height="15.6" fill="#f4a3aa"/><path d="M67.0 285.0c3-5 13-5 16 0c-3 5-13 5-16 0z" fill="#9a9a9a"/><circle cx="75.0" cy="285.0" r="2.7" fill="#eee"/><circle cx="75.0" cy="285.0" r="1.5" fill="#9a9a9a"/><rect x="89" y="277" width="97.7" height="15.4" fill="#8e8e8e"/><path d="M92.5 281.5l3.5-3.5h11v11l-3.5 3.5h-11z" fill="#dde2ea" stroke="#222" stroke-width="1.1" stroke-linejoin="round"/><path d="M92.5 281.5h11v11M103.5 281.5l3.5-3.5" fill="none" stroke="#222" stroke-width="1"/><path d="M93.5 282.5h9.5v9.5h-9.5z" fill="#d4d9e2"/><path d="M89 292.5M90.0 292.6l2.4-2.4M95.3 292.6l2.4-2.4M100.6 292.6l2.4-2.4M105.9 292.6l2.4-2.4M111.2 292.6l2.4-2.4M116.5 292.6l2.4-2.4M121.8 292.6l2.4-2.4M127.1 292.6l2.4-2.4M132.4 292.6l2.4-2.4M137.7 292.6l2.4-2.4M143.0 292.6l2.4-2.4M148.3 292.6l2.4-2.4M153.6 292.6l2.4-2.4M158.9 292.6l2.4-2.4M164.2 292.6l2.4-2.4M169.5 292.6l2.4-2.4M174.8 292.6l2.4-2.4M180.1 292.6l2.4-2.4" stroke="#a6bde8" stroke-width="1.5"/><circle cx="197.5" cy="285.5" r="5.8" fill="#fff" stroke="#2a2a2a" stroke-width="1.3"/><circle cx="197.5" cy="285.5" r="2.4" fill="#2a2a2a"/><circle cx="288.5" cy="971.6" r="4.8" fill="#222"/><path d="M285.6 971.6h5.8M288.5 968.7v5.8" stroke="#fff" stroke-width="1.4"/><path d="M300.3 966v11M302.3 967.5v8" stroke="#555" stroke-width=".9"/><path d="M485.2 973.6c.5-2.2 4-3.4 8.2-3.4c4.6 0 7.6 1.4 7.6 3.4c0 1.8-2.6 3-6.4 3.3" fill="none" stroke="#2f2f2f" stroke-width="1.3"/><path d="M492.4 980.6v-12.4h-1.8l3-3.4l3 3.4h-1.8v12.4z" fill="#fafafa" stroke="#2f2f2f" stroke-width="1"/><path d="M494.8 976.6c-2.4.2-4.6.1-6.6-.3" fill="none" stroke="#2f2f2f" stroke-width="1.3"/><path d="M490 973.8l-3.6 2.6l3.4 2.4z" fill="#2f2f2f"/><path d="M506.3 971.2H511.8L509.1 975.0Z" fill="#2f2f2f"/><rect x="518.6" y="970.3" width="15" height="10" rx="1" fill="#fafafa" stroke="#2f2f2f" stroke-width="1.2"/><rect x="521.6" y="973.4" width="8.8" height="3.9" fill="#b7bcc6" stroke="#333" stroke-width=".9"/><path d="M520 970l4.2-3.6l.2 2.2l4.4-1.2l1.6-1.3l.6 3.9" fill="#fafafa" stroke="#2f2f2f" stroke-width="1.1" stroke-linejoin="round"/><path d="M547 977.5c-1.2-1.4-2.8-2.8-2.2-3.8c.6-.9 2-.4 3 .6l.6 .6v-6.6c0-1.1 1.8-1.1 1.8 0v4.6v-6.2c0-1.1 1.8-1.1 1.8 0v6v-6.6c0-1.1 1.8-1.1 1.8 0v6.6v-5.4c0-1.1 1.8-1.1 1.8 0v3.8v2.4c.4-1 .9-1.8 1.6-1.6c.9 .3 .4 1.8 0 3c-.6 2-1.4 3.6-2.8 4.8c-.6 .5-1.2 .8-2 .8h-2.6c-1.4 0-2.2-1.2-2.8-2z" fill="#f6f7f9" stroke="#2f2f2f" stroke-width="1.1" stroke-linejoin="round"/><path d="M550 973v-3M551.8 973v-4M553.6 973v-3.2" stroke="#333" stroke-width=".6"/><circle cx="575" cy="972.5" r="4.8" fill="#e8f0f8" stroke="#2f2f2f" stroke-width="1.4"/><path d="M578.5 976l3.8 3.8" stroke="#2f2f2f" stroke-width="2.4"/><path d="M582.5 966.5h4.5M584.7 964.5v4.3M582.5 970.5h4.5" stroke="#2f2f2f" stroke-width="1"/><rect x="595.5" y="964.7" width="15" height="15" fill="none" stroke="#555" stroke-width=".9" stroke-dasharray="1.5 1.5"/><circle cx="602" cy="971" r="5.3" fill="#e8f0f8" stroke="#2f2f2f" stroke-width="1.4"/><path d="M606 975l5 5" stroke="#2f2f2f" stroke-width="2.4"/><path d="M617.7 971.5H623.0L620.4 975.0Z" fill="#2f2f2f"/><rect x="629.4" y="965.3" width="15.4" height="12.7" rx="1.4" fill="#ececec" stroke="#3a3a3a" stroke-width="1.1"/><rect x="631.4" y="967.3" width="11.4" height="8.4" rx="1" fill="#a9c5e6" stroke="#2a4a7a" stroke-width="1.1"/><rect x="633.6" y="978.3" width="6.8" height="2.2" rx="1" fill="#eee" stroke="#3a3a3a" stroke-width=".9"/><path d="M647.4 971.5H652.8L650.1 975.0Z" fill="#2f2f2f"/><rect x="660.3" y="965.3" width="15.4" height="15.4" rx="1.6" fill="#5a5a5a"/><rect x="661.6" y="966.6" width="2" height="2" fill="#ffffff"/><rect x="661.6" y="969.6" width="2" height="2" fill="#ffffff"/><rect x="661.6" y="972.6" width="2" height="2" fill="#ffffff"/><rect x="661.6" y="975.6" width="2" height="2" fill="#d6d6d6"/><rect x="661.6" y="978.6" width="2" height="2" fill="#b8b8b8"/><rect x="664.6" y="966.6" width="2" height="2" fill="#ffffff"/><rect x="664.6" y="969.6" width="2" height="2" fill="#ffffff"/><rect x="664.6" y="972.6" width="2" height="2" fill="#ffffff"/><rect x="664.6" y="975.6" width="2" height="2" fill="#d6d6d6"/><rect x="664.6" y="978.6" width="2" height="2" fill="#b8b8b8"/><rect x="667.6" y="966.6" width="2" height="2" fill="#ffffff"/><rect x="667.6" y="969.6" width="2" height="2" fill="#ffffff"/><rect x="667.6" y="972.6" width="2" height="2" fill="#ffffff"/><rect x="667.6" y="975.6" width="2" height="2" fill="#d6d6d6"/><rect x="667.6" y="978.6" width="2" height="2" fill="#b8b8b8"/><rect x="670.6" y="966.6" width="2" height="2" fill="#ffffff"/><rect x="670.6" y="969.6" width="2" height="2" fill="#ffffff"/><rect x="670.6" y="972.6" width="2" height="2" fill="#ffffff"/><rect x="670.6" y="975.6" width="2" height="2" fill="#d6d6d6"/><rect x="670.6" y="978.6" width="2" height="2" fill="#b8b8b8"/><rect x="673.6" y="966.6" width="2" height="2" fill="#ffffff"/><rect x="673.6" y="969.6" width="2" height="2" fill="#ffffff"/><rect x="673.6" y="972.6" width="2" height="2" fill="#ffffff"/><rect x="673.6" y="975.6" width="2" height="2" fill="#d6d6d6"/><rect x="673.6" y="978.6" width="2" height="2" fill="#b8b8b8"/><path d="M678.7 971.5H684.0L681.4 975.0Z" fill="#2f2f2f"/><rect x="691.2" y="965.9" width="6.6" height="6.4" rx="1" fill="#a9c6ea" stroke="#2c4a80" stroke-width="1.2"/><path d="M693.0 969.1h3" stroke="#6d8fc0" stroke-width=".9"/><rect x="698.7" y="965.9" width="6.6" height="6.4" rx="1" fill="#a9c6ea" stroke="#2c4a80" stroke-width="1.2"/><path d="M700.5 969.1h3" stroke="#6d8fc0" stroke-width=".9"/><rect x="691.2" y="973.1" width="6.6" height="6.4" rx="1" fill="#a9c6ea" stroke="#2c4a80" stroke-width="1.2"/><path d="M693.0 976.3h3" stroke="#6d8fc0" stroke-width=".9"/><rect x="698.7" y="973.1" width="6.6" height="6.4" rx="1" fill="#a9c6ea" stroke="#2c4a80" stroke-width="1.2"/><path d="M700.5 976.3h3" stroke="#6d8fc0" stroke-width=".9"/><path d="M709.7 971.5H714.9L712.3 975.0Z" fill="#2f2f2f"/><defs><radialGradient id="sh" cx=".5" cy=".5" r=".5"><stop offset="0" stop-color="#000" stop-opacity=".18"/><stop offset="1" stop-color="#000" stop-opacity="0"/></radialGradient></defs><ellipse cx="1138" cy="240" rx="38" ry="16" fill="url(#sh)"/><path d="M1138.7 172.7 L1103.7 189.1 L1137.1 207.6 L1172.0 188.6Z" fill="#eeeeee" fill-opacity=".62" stroke="#777" stroke-width=".7"/><path d="M1103.7 189.1 L1137.1 207.6 L1137.6 247.8 L1105.9 226.6Z" fill="#e4e4e4" fill-opacity=".62" stroke="#777" stroke-width=".7"/><path d="M1137.1 207.6 L1172.0 188.6 L1169.3 226.1 L1137.6 247.8Z" fill="#dcdcdc" fill-opacity=".62" stroke="#777" stroke-width=".7"/><text font-family="Liberation Sans" font-size="8.5" fill="#7a7a7a" transform="translate(1128.5,183) rotate(28) skewX(-28)">TOP</text><text font-family="Liberation Sans" font-size="8.2" fill="#707070" transform="translate(1107.5,211) rotate(31)">FRONT</text><text font-family="Liberation Sans" font-size="8.2" fill="#777" transform="translate(1144.5,229.5) rotate(-33)">RIGHT</text><path d="M1105.9 226.6L1100.8 181.5" stroke="#4b4bff" stroke-width="1.8"/><path d="M1105.9 226.6L1143 254" stroke="#ff6262" stroke-width="1.8"/><text x="1095" y="178" font-family="Liberation Sans" font-weight="bold" font-size="11" fill="#5b5bff">Z</text><text x="1144.5" y="264" font-family="Liberation Sans" font-weight="bold" font-size="10" fill="#ff8a8a">X</text><rect x="12" y="1007" width="2.2" height="14" fill="#4a4a4a"/><path d="M14.8 1014l9-7v14z" fill="#4a4a4a"/><path d="M36.6 1014l8.6-7v14z" fill="#4a4a4a"/><rect x="46.6" y="1010.5" width="2.4" height="7" fill="#4a4a4a"/><path d="M62.2 1006l11.9 8l-11.9 8z" fill="#4a4a4a"/><rect x="85.7" y="1010.5" width="2.4" height="7" fill="#4a4a4a"/><path d="M89.6 1007l9.2 7l-9.2 7z" fill="#4a4a4a"/><path d="M112 1007l9.3 7l-9.3 7z" fill="#4a4a4a"/><rect x="122" y="1007" width="2.2" height="14" fill="#4a4a4a"/><rect x="145" y="997" width="43.5" height="5.8" fill="#f8aaaa"/><path d="M172 1003l3-5M176.5 1003l3-5M181 1003l3-5" stroke="#333" stroke-width="1.6"/><rect x="148.5" y="1006" width="12.5" height="12.5" fill="none" stroke="#555" stroke-width=".9" stroke-dasharray="2 1.5"/><rect x="147.5" y="1005.0" width="2" height="2" fill="#1e88e5"/><rect x="160.0" y="1005.0" width="2" height="2" fill="#1e88e5"/><rect x="147.5" y="1017.5" width="2" height="2" fill="#1e88e5"/><path d="M156 1019l5.5-5.5l2 2l-5.5 5.5h-2z" fill="#f3b54a"/><path d="M161.5 1013.5l1.2-1.2l2 2l-1.2 1.2z" fill="#e03a3a"/><path d="M171 1009l3-3h9v10l-3 3h-9z" fill="#5aa6e8"/><path d="M171 1009l3-3h9l-3 3z" fill="#8dcbf7"/><path d="M180 1009l3-3v10l-3 3z" fill="#3f8fcc"/><path d="M171 1020.5h10" stroke="#bbb" stroke-width="1.4"/><path d="M185.8 1018v-10M184 1010l1.8-2.5l1.8 2.5" fill="none" stroke="#333" stroke-width="1"/><path d="M184.8 999h12.5l-4.5 5.8h-3.5z" fill="#555"/><rect x="190.3" y="1004" width="2.1" height="26.6" fill="#555"/><path d="M148 1029.3h32M156 1024v5.3M179.4 1024v5.3" fill="none" stroke="#c4c4c4" stroke-width="1.8"/><path d="M1185.67 1012.76 L1187.91 1012.80 L1187.91 1015.20 L1185.67 1015.24 L1185.36 1016.22 L1184.88 1017.13 L1186.44 1018.74 L1184.74 1020.44 L1183.13 1018.88 L1182.22 1019.36 L1181.24 1019.67 L1181.20 1021.91 L1178.80 1021.91 L1178.76 1019.67 L1177.78 1019.36 L1176.87 1018.88 L1175.26 1020.44 L1173.56 1018.74 L1175.12 1017.13 L1174.64 1016.22 L1174.33 1015.24 L1172.09 1015.20 L1172.09 1012.80 L1174.33 1012.76 L1174.64 1011.78 L1175.12 1010.87 L1173.56 1009.26 L1175.26 1007.56 L1176.87 1009.12 L1177.78 1008.64 L1178.76 1008.33 L1178.80 1006.09 L1181.20 1006.09 L1181.24 1008.33 L1182.22 1008.64 L1183.13 1009.12 L1184.74 1007.56 L1186.44 1009.26 L1184.88 1010.87 L1185.36 1011.78Z" fill="#8e8e8e"/><circle cx="1180.00" cy="1014.00" r="2.80" fill="#f1f1f1"/></svg>
<div class="t" style="left:30.0px;top:8.8px;font-size:13.0px;color:#000;transform:scaleX(0.943)">Autodesk Fusion 360 (Education License)</div>
<div class="t" style="left:554.1px;top:43.0px;font-size:13.0px;color:#3a3a3a;transform:scaleX(0.948)">Untitled*</div>
<div class="t" style="left:1171.7px;top:41.6px;font-size:11.5px;color:#333;transform:scaleX(0.850)">CL</div>
<div class="t" style="left:151.6px;top:68.6px;font-size:11.0px;color:#1597d8;transform:scaleX(0.884)">SOLID</div>
<div class="t" style="left:229.4px;top:68.6px;font-size:11.0px;color:#3c3c3c;transform:scaleX(0.889)">SURFACE</div>
<div class="t" style="left:322.5px;top:68.6px;font-size:11.0px;color:#3c3c3c;transform:scaleX(0.843)">MESH</div>
<div class="t" style="left:395.5px;top:68.7px;font-size:11.0px;color:#3c3c3c;transform:scaleX(0.886)">SHEET METAL</div>
<div class="t" style="left:508.0px;top:68.7px;font-size:11.0px;color:#3c3c3c;transform:scaleX(0.938)">TOOLS</div>
<div class="t" style="left:43.6px;top:98.5px;font-size:11.0px;font-weight:bold;color:#3c3c3c;transform:scaleX(0.872)">DESIGN</div>
<div class="t" style="left:150.4px;top:129.8px;font-size:11.0px;color:#3c3c3c;transform:scaleX(0.890)">CREATE</div>
<div class="t" style="left:332.5px;top:129.8px;font-size:11.0px;color:#3c3c3c;transform:scaleX(0.860)">MODIFY</div>
<div class="t" style="left:508.4px;top:129.8px;font-size:11.0px;color:#3c3c3c;transform:scaleX(0.909)">ASSEMBLE</div>
<div class="t" style="left:603.4px;top:129.8px;font-size:11.0px;color:#3c3c3c;transform:scaleX(0.889)">CONSTRUCT</div>
<div class="t" style="left:702.3px;top:129.8px;font-size:11.0px;color:#3c3c3c;transform:scaleX(0.847)">INSPECT</div>
<div class="t" style="left:814.3px;top:129.8px;font-size:11.0px;color:#3c3c3c;transform:scaleX(0.847)">INSERT</div>
<div class="t" style="left:921.3px;top:129.8px;font-size:11.0px;color:#3c3c3c;transform:scaleX(0.865)">SELECT</div>
<div class="t" style="left:30.6px;top:155.7px;font-size:11.0px;color:#555;transform:scaleX(0.897)">BROWSER</div>
<div class="t" style="left:158.8px;top:153.0px;font-size:12.8px;font-weight:bold;color:#fff;font-family:'Liberation Serif'">Create Sketch</div>
<div class="t" style="left:104.5px;top:183.7px;font-size:11.0px;color:#444">(Unsaved)</div>
<div class="t" style="left:92.4px;top:207.6px;font-size:11.0px;color:#3a3a3a;transform:scaleX(0.958)">Document Settings</div>
<div class="t" style="left:92.4px;top:232.2px;font-size:11.0px;color:#3a3a3a;transform:scaleX(0.990)">Named Views</div>
<div class="t" style="left:117.3px;top:255.7px;font-size:11.0px;color:#3a3a3a;transform:scaleX(0.924)">Origin</div>
<div class="t" style="left:122.3px;top:279.2px;font-size:11.0px;font-weight:bold;color:#fff;transform:scaleX(0.976)">my Body:1</div>
<div class="t" style="left:30.4px;top:966.8px;font-size:11.0px;color:#555;transform:scaleX(0.877)">COMMENTS</div>
<div class="t" style="left:1028.8px;top:968.2px;font-size:11.0px;font-weight:bold;color:#333;transform:scaleX(1.008)">1 Face | Area : 1350.00 mm^2</div>
<svg class="ov" width="1202" height="1040" viewBox="0 0 1202 1040"><path d="M201.80 79.60 C204.47 79.75 206.95 80.47 209.00 81.50 C211.05 82.53 212.68 83.55 214.10 85.80 C215.52 88.05 216.82 91.63 217.50 95.00 C218.18 98.37 218.28 102.75 218.20 106.00 C218.12 109.25 217.60 112.00 217.00 114.50 C216.40 117.00 216.18 118.25 214.60 121.00 C213.02 123.75 209.93 128.67 207.50 131.00 C205.07 133.33 202.52 134.20 200.00 135.00 C197.48 135.80 195.07 135.88 192.40 135.80 C189.73 135.72 186.40 135.33 184.00 134.50 C181.60 133.67 179.80 132.63 178.00 130.80 C176.20 128.97 174.27 126.42 173.20 123.50 C172.13 120.58 171.47 116.38 171.60 113.30 C171.73 110.22 172.98 107.42 174.00 105.00 C175.02 102.58 176.28 101.22 177.70 98.80 C179.12 96.38 180.95 92.87 182.50 90.50 C184.05 88.13 185.25 86.25 187.00 84.60 C188.75 82.95 190.53 81.43 193.00 80.60 C195.47 79.77 199.13 79.45 201.80 79.60" fill="none" stroke="#e21b1b" stroke-width="6.8" stroke-linejoin="round"/><path d="M197 80.5c2-3 6-4.5 9.5-1.5" fill="none" stroke="#e21b1b" stroke-width="5" stroke-linecap="round"/></svg>
</body></html>
